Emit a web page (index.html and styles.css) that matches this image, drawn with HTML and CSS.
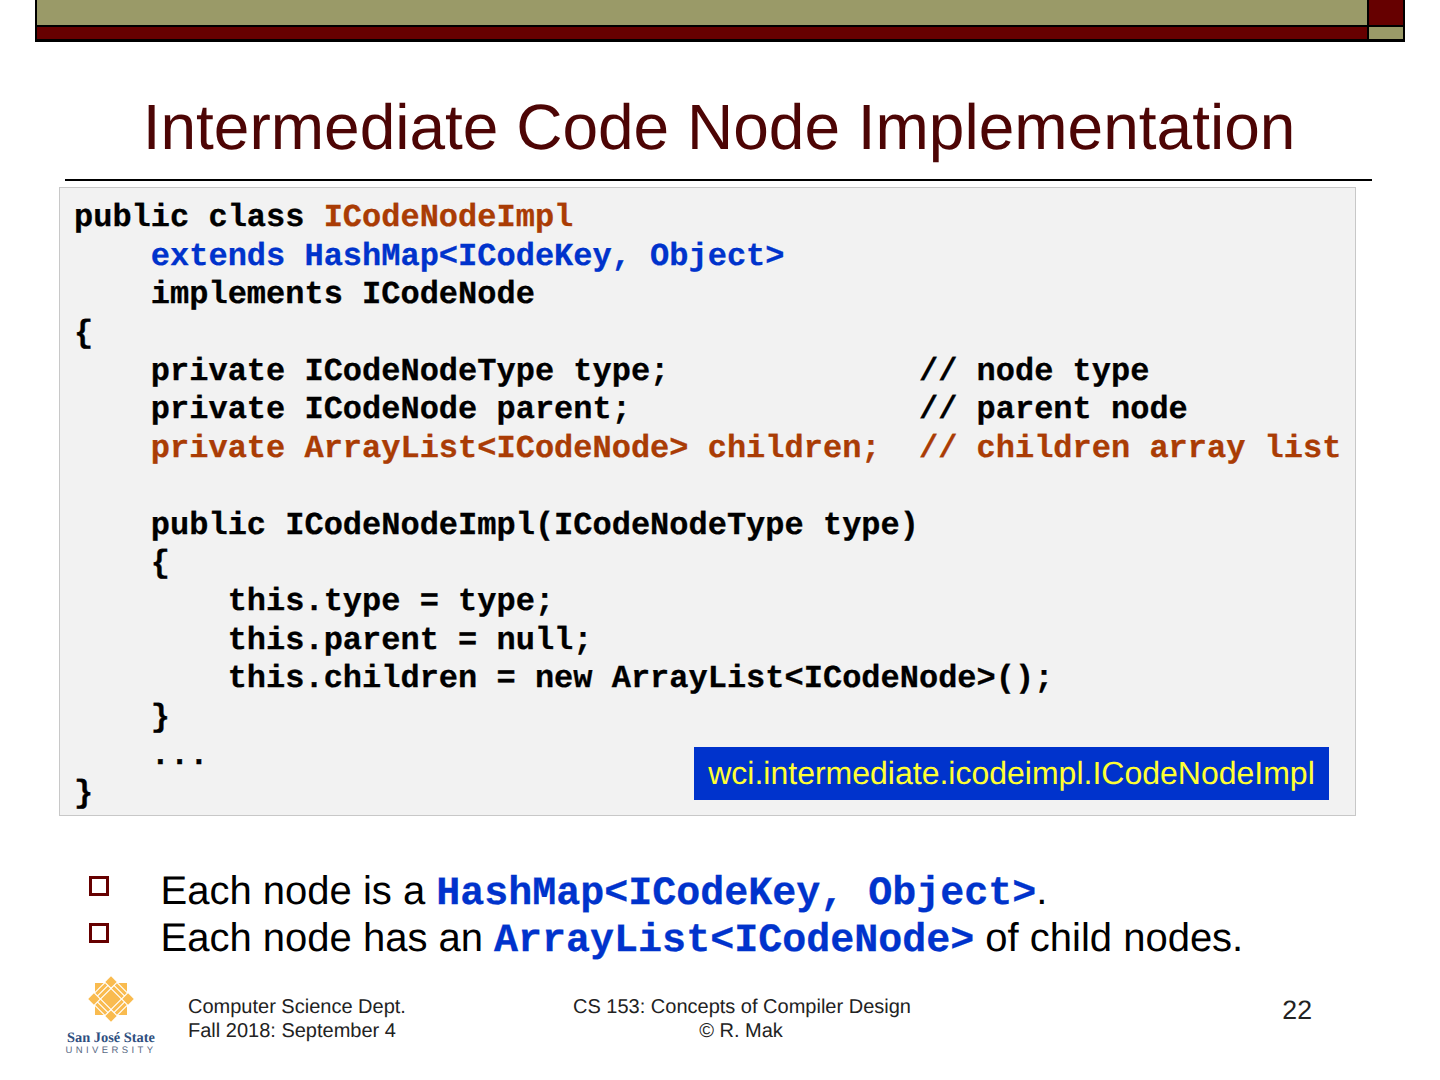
FILE: index.html
```html
<!DOCTYPE html>
<html lang="en">
<head>
<meta charset="utf-8">
<title>Intermediate Code Node Implementation</title>
<link rel="stylesheet" href="styles.css">
</head>
<body>
<main class="slide">
  <header class="bar">
    <div class="olive"></div>
    <div class="maroon"></div>
    <div class="maroon"></div>
    <div class="olive"></div>
  </header>
  <h1 class="title">Intermediate Code Node Implementation</h1>
  <div class="rule"></div>
  <section class="code-box">
<pre class="code">public class <span class="rust">ICodeNodeImpl</span>
    <span class="blue">extends HashMap&lt;ICodeKey, Object&gt;</span>
    implements ICodeNode
{
    private ICodeNodeType type;             // node type
    private ICodeNode parent;               // parent node
    <span class="rust">private ArrayList&lt;ICodeNode&gt; children;  // children array list</span>

    public ICodeNodeImpl(ICodeNodeType type)
    {
        this.type = type;
        this.parent = null;
        this.children = new ArrayList&lt;ICodeNode&gt;();
    }
    ...
}</pre>
    <div class="badge">wci.intermediate.icodeimpl.ICodeNodeImpl</div>
  </section>
  <ul class="bullets">
    <li>Each node is a <code class="inline">HashMap&lt;ICodeKey, Object&gt;</code>.</li>
    <li>Each node has an <code class="inline">ArrayList&lt;ICodeNode&gt;</code> of child nodes.</li>
  </ul>
  <footer class="footer">
    <div class="logo">
      <svg class="mark" viewBox="0 0 60 60" width="46" height="46" aria-hidden="true">
        <g fill="#f9bb4f" transform="rotate(45 30 30)">
          <rect x="21" y="21" width="18" height="18"/>
          <rect x="21" y="10" width="18" height="4"/><rect x="21" y="15.5" width="18" height="4"/>
          <rect x="21" y="40.5" width="18" height="4"/><rect x="21" y="46" width="18" height="4"/>
          <rect x="10" y="21" width="4" height="18"/><rect x="15.5" y="21" width="4" height="18"/>
          <rect x="40.5" y="21" width="4" height="18"/><rect x="46" y="21" width="4" height="18"/>
          <rect x="9" y="9" width="10.5" height="10.5"/><rect x="40.5" y="9" width="10.5" height="10.5"/>
          <rect x="9" y="40.5" width="10.5" height="10.5"/><rect x="40.5" y="40.5" width="10.5" height="10.5"/>
          <polygon points="22,8.5 38,8.5 30,0.5"/><polygon points="22,51.5 38,51.5 30,59.5"/>
          <polygon points="8.5,22 8.5,38 0.5,30"/><polygon points="51.5,22 51.5,38 59.5,30"/>
        </g>
      </svg>
      <div class="sjsu">San José State</div>
      <div class="univ">UNIVERSITY</div>
    </div>
    <div class="dept">Computer Science Dept.<br>Fall 2018: September 4</div>
    <div class="course">CS 153: Concepts of Compiler Design<br>© R. Mak</div>
    <div class="page">22</div>
  </footer>
</main>
</body>
</html>
```
FILE: styles.css
```css
html, body { margin: 0; padding: 0; background: #fff; }
.slide {
  width: 1440px;
  height: 1080px;
  overflow: hidden;
  display: flex;
  flex-direction: column;
  font-family: "Liberation Sans", Arial, sans-serif;
  color: #000;
  text-rendering: geometricPrecision;
}
.bar {
  box-sizing: border-box;
  margin: 0 35px;
  height: 42px;
  flex: none;
  display: grid;
  grid-template-columns: 1fr 34px;
  grid-template-rows: 25px 12px;
  gap: 2px;
  padding: 0 2px 1px;
  border-bottom: 1px solid #000;
  background: #000;
}
.olive { background: #9a9a68; }
.maroon { background: #660000; }
.title {
  margin: 50px 0 0;
  height: 87px;
  flex: none;
  text-align: center;
  padding-right: 2px;
  font-weight: 400;
  font-size: 64px;
  line-height: 70px;
  color: #4d0505;
  white-space: nowrap;
}
.rule {
  flex: none;
  height: 2px;
  margin: 0 68px 0 65px;
  background: #000;
}
.code-box {
  position: relative;
  box-sizing: border-box;
  flex: none;
  width: 1297px;
  height: 629px;
  margin: 6px 0 0 59px;
  padding: 11.4px 14px 0 14px;
  background: #f2f2f2;
  border: 1px solid #c8c8c8;
}
.code {
  margin: 0;
  font-family: "Liberation Mono", "Courier New", monospace;
  font-weight: 700;
  font-size: 32px;
  line-height: 38.4px;
  color: #000;
  -webkit-text-stroke: 0.3px currentColor;
}
.rust { color: #aa3c05; }
.blue { color: #0033cc; }
.badge {
  position: absolute;
  left: 634px;
  top: 559px;
  width: 635px;
  height: 53px;
  text-align: center;
  background: #0033cc;
  color: #ffff33;
  font-size: 32px;
  line-height: 53px;
  white-space: nowrap;
}
.bullets {
  list-style: none;
  margin: 52px 0 0;
  padding: 0 0 0 160.5px;
  flex: none;
  font-size: 40px;
  line-height: 46px;
}
.bullets li { position: relative; white-space: nowrap; }
.bullets li::before {
  content: "";
  position: absolute;
  left: -71.5px;
  top: 8px;
  width: 14px;
  height: 14px;
  border: 3px solid #660000;
}
.inline {
  font-family: "Liberation Mono", "Courier New", monospace;
  font-weight: 700;
  font-size: 40px;
  line-height: 1;
  color: #0033cc;
  -webkit-text-stroke: 0.3px currentColor;
}
.footer {
  flex: none;
  margin-top: 22px;
  display: grid;
  grid-template-columns: 122px 385px 336px 1fr;
  padding-left: 66px;
  font-size: 20px;
  line-height: 24px;
  color: #222;
}
.logo {
  width: 90px;
  margin-top: -8px;
  display: flex;
  flex-direction: column;
  align-items: center;
  color: #2f4f80;
}
.mark { margin-bottom: 8px; flex: none; }
.sjsu {
  font-family: "Liberation Serif", serif;
  font-weight: 700;
  font-size: 14.4px;
  line-height: 16px;
  white-space: nowrap;
}
.univ {
  margin-top: -1px;
  font-size: 9.5px;
  line-height: 11px;
  letter-spacing: 3.4px;
  color: #5a6a85;
  white-space: nowrap;
}
.dept { margin-top: 11px; white-space: nowrap; }
.course { margin-top: 11px; text-align: center; white-space: nowrap; }
.page {
  margin: 11px 128px 0 0;
  text-align: right;
  font-size: 26.67px;
  line-height: 30px;
}
```
